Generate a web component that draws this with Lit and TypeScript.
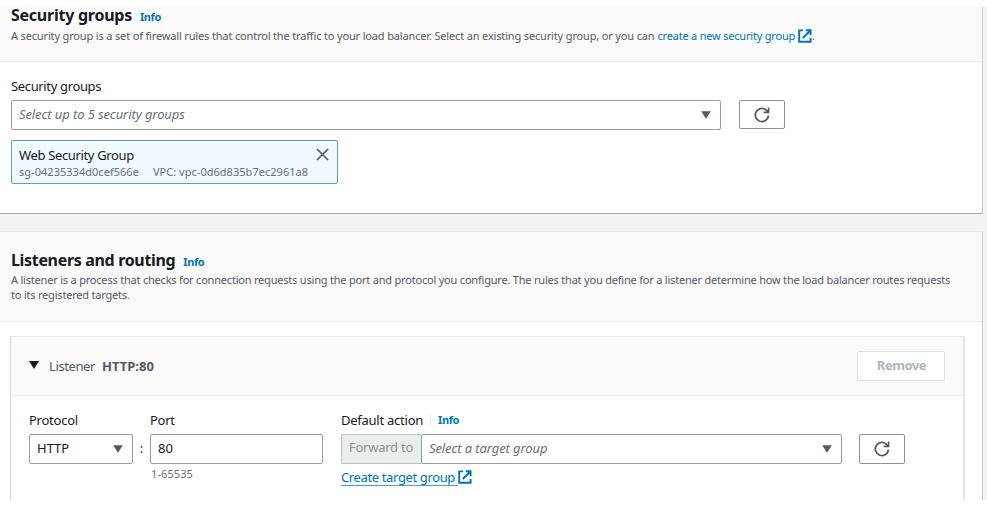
import { LitElement, html, css } from "lit";
import { customElement, property } from "lit/decorators.js";

const base = css`
  * {
    box-sizing: border-box;
  }
  :host {
    font-family: "Noto Sans", "Open Sans", sans-serif;
  }
  svg {
    display: block;
    flex: none;
  }
`;

@customElement("external-icon")
class ExternalIcon extends LitElement {
  static styles = [
    base,
    css`
      :host {
        display: block;
        width: 14px;
        height: 14px;
        flex: none;
        color: #0073bb;
      }
    `,
  ];
  render() {
    return html`<svg width="14" height="14" viewBox="0 0 14 14" fill="none" stroke="currentColor" stroke-width="1.9">
      <path d="M5 1.4H1.2v11.4h11.4V9" />
      <path d="M7.8 1.2h4.8v5M12.3 1.5L4.8 9" />
    </svg>`;
  }
}

@customElement("refresh-button")
class RefreshButton extends LitElement {
  static styles = [
    base,
    css`
      :host {
        display: block;
        flex: none;
      }
      .button {
        width: 46px;
        height: 100%;
        padding: 0;
        display: flex;
        align-items: center;
        justify-content: center;
        border: 1px solid #8d9293;
        border-radius: 2px;
        background: #fff;
        color: #545b64;
      }
    `,
  ];
  render() {
    return html`<button class="button" aria-label="Refresh">
      <svg width="16" height="16" viewBox="0 0 16 16" fill="none" stroke="currentColor" stroke-width="1.8">
        <path d="M14.5 8.6A6.6 6.6 0 1 1 12.9 3.7L14.4 5.2" />
        <path d="M14.6 0.6v4.8H9.6" stroke-width="1.6" />
      </svg>
    </button>`;
  }
}

@customElement("select-field")
class SelectField extends LitElement {
  @property() text = "";
  @property({ type: Boolean }) placeholder = false;
  static styles = [
    base,
    css`
      :host {
        display: block;
        height: 30px;
      }
      .field {
        height: 100%;
        display: flex;
        align-items: center;
        justify-content: space-between;
        padding: 0 9px 0 7px;
        border: 1px solid #989d9e;
        border-radius: 2px;
        background: #fff;
        color: #16191f;
        font-size: 13px;
        line-height: 18px;
        white-space: nowrap;
      }
      .text {
        padding-bottom: 2px;
      }
      .hint {
        color: #687078;
        font-style: italic;
        letter-spacing: -0.1px;
      }
    `,
  ];
  render() {
    return html`<div class="field">
      <span class=${this.placeholder ? "text hint" : "text"}>${this.text}</span>
      <svg width="10" height="8" viewBox="0 0 10 8" fill="#545b64"><path d="M0.2 0.3h9.6L5 7.8z" /></svg>
    </div>`;
  }
}

@customElement("app-root")
class AppRoot extends LitElement {
  static styles = [
    base,
    css`
      :host {
        display: block;
        height: 508px;
        padding: 7px 0 8px;
        background: #fff;
        color: #16191f;
        font-size: 13px;
        line-height: 18px;
        white-space: nowrap;
      }
      .page {
        height: 493px;
        background: #f2f3f3;
        padding-right: 4px;
        display: flex;
        flex-direction: column;
        gap: 17px;
      }
      .panel {
        flex: none;
        background: #fff;
        border-right: 1px solid #c5cacc;
      }
      .groups {
        height: 207px;
        border-bottom: 1px solid #a2a4a5;
      }
      .listeners {
        height: 269px;
        border-top: 1px solid #eaeded;
      }
      .head {
        display: flow-root;
        background: #fafafa;
        border-bottom: 1px solid #eaeded;
        padding-left: 11px;
      }
      .groups .head {
        height: 55px;
      }
      .listeners .head {
        height: 90px;
        padding-top: 16px;
      }
      .heading {
        display: flex;
        align-items: baseline;
        gap: 8px;
      }
      .groups .heading {
        margin-top: -3px;
      }
      h2 {
        margin: 0;
        font-size: 16px;
        line-height: 22px;
        font-weight: 700;
        letter-spacing: -0.25px;
      }
      .listeners h2 {
        letter-spacing: -0.33px;
        line-height: 24px;
      }
      .info {
        font-size: 11px;
        line-height: 14px;
        font-weight: 700;
        color: #0073bb;
        letter-spacing: -0.4px;
      }
      .desc {
        display: flex;
        align-items: center;
        font-size: 11px;
        line-height: 15px;
        color: #545b64;
        letter-spacing: -0.157px;
      }
      .groups .desc {
        margin-top: 2px;
      }
      .listeners .desc {
        display: block;
        letter-spacing: -0.203px;
      }
      .desc a {
        color: #0073bb;
        letter-spacing: -0.2px;
        margin-left: 3px;
        margin-right: 3px;
      }
      .label {
        letter-spacing: -0.25px;
      }
      .body {
        padding: 15px 0 0 11px;
      }
      .wide {
        letter-spacing: -0.35px;
      }
      .picker {
        display: flex;
        gap: 18px;
        margin-top: 5px;
      }
      .picker select-field {
        width: 710px;
      }
      .picker refresh-button {
        height: 29px;
      }
      .token {
        margin-top: 10px;
        width: 327px;
        height: 44px;
        display: flex;
        justify-content: space-between;
        padding: 5px 8px 0 7px;
        border: 1px solid #5a9fb2;
        border-radius: 2px;
        background: #f1faff;
      }
      .dismiss {
        margin-top: 2px;
      }
      .meta {
        display: flex;
        gap: 14px;
        font-size: 11px;
        line-height: 16px;
        letter-spacing: 0.03px;
        color: #687078;
      }
      .card {
        margin: 14px 17px 0 10px;
        height: 164px;
        border: 1px solid #eaeded;
        border-right: 2px solid #e4e6e6;
        border-left-color: #d5dbdb;
        border-bottom: 0;
      }
      .bar {
        height: 59px;
        display: flex;
        align-items: center;
        padding: 0 18px 0 18px;
        background: #fafafa;
        border-bottom: 1px solid #eaeded;
        color: #545b64;
      }
      .name,
      .proto {
        padding-bottom: 1px;
      }
      .bar svg {
        margin-bottom: 2px;
      }
      .name {
        margin-left: 10px;
        letter-spacing: -0.39px;
      }
      .proto {
        margin-left: 7px;
        font-weight: 700;
      }
      .remove {
        margin-left: auto;
        width: 88px;
        height: 30px;
        padding: 0 0 2px 1px;
        border: 1px solid #dfe3e3;
        border-radius: 2px;
        background: #fff;
        color: #aab7b8;
        font: 700 13px/18px "Noto Sans", sans-serif;
        letter-spacing: -0.45px;
      }
      .form {
        display: flex;
        padding: 15px 0 0 18px;
      }
      .control {
        margin-top: 5px;
      }
      .protocol {
        width: 104px;
      }
      .colon {
        width: 17px;
        padding-top: 28px;
        text-align: center;
      }
      .port {
        width: 173px;
      }
      .input {
        height: 30px;
        border: 1px solid #989d9e;
        border-radius: 2px;
        padding: 4px 7px;
      }
      .note {
        margin-top: 1px;
        padding-left: 1px;
        font-size: 11px;
        line-height: 18px;
        letter-spacing: 0.1px;
        color: #687078;
      }
      .action {
        width: 501px;
        margin-left: 18px;
      }
      .caption {
        display: flex;
        align-items: center;
      }
      .caption .info {
        margin-left: 7px;
        padding-left: 7px;
        border-left: 1px solid #eaeded;
      }
      .join {
        display: flex;
      }
      .forward {
        width: 80px;
        height: 30px;
        padding: 3px 0 0 7px;
        border: 1px solid #b9c3c4;
        border-right: 0;
        border-radius: 2px 0 0 2px;
        background: #eaeded;
        color: #879596;
        letter-spacing: -0.25px;
      }
      .join select-field {
        flex: 1;
      }
      .create {
        display: inline-flex;
        align-items: center;
        margin-top: 5px;
        color: #0073bb;
        letter-spacing: -0.37px;
      }
      .create span {
        padding-right: 3px;
        border-bottom: 1px solid #4d9dcf;
        line-height: 16px;
      }
      .create external-icon {
        margin-bottom: 1px;
      }
      .form > refresh-button {
        height: 30px;
        margin: 23px 0 0 17px;
      }
    `,
  ];

  render() {
    return html`<div class="page">
      <section class="panel groups">
        <header class="head">
          <div class="heading">
            <h2>Security groups</h2>
            <a class="info">Info</a>
          </div>
          <div class="desc">
            <span>A security group is a set of firewall rules that control the traffic to your load balancer. Select an existing security group, or you can</span>
            <a>create a new security group</a><external-icon></external-icon><span>.</span>
          </div>
        </header>
        <div class="body">
          <div class="label wide">Security groups</div>
          <div class="picker">
            <select-field placeholder text="Select up to 5 security groups"></select-field>
            <refresh-button></refresh-button>
          </div>
          <div class="token">
            <div>
              <div class="wide">Web Security Group</div>
              <div class="meta"><span>sg-04235334d0cef566e</span><span>VPC: vpc-0d6d835b7ec2961a8</span></div>
            </div>
            <svg class="dismiss" width="13" height="13" viewBox="0 0 13 13" fill="none" stroke="#545b64" stroke-width="1.7">
              <path d="M1 1l11 11M12 1L1 12" />
            </svg>
          </div>
        </div>
      </section>

      <section class="panel listeners">
        <header class="head">
          <div class="heading">
            <h2>Listeners and routing</h2>
            <a class="info">Info</a>
          </div>
          <div class="desc">
            A listener is a process that checks for connection requests using the port and protocol you configure. The rules that you define for a listener determine how the load balancer routes requests<br />to its registered targets.
          </div>
        </header>
        <div class="card">
          <div class="bar">
            <svg width="10" height="8" viewBox="0 0 10 8" fill="#16191f"><path d="M0 0h10L5 8z" /></svg>
            <span class="name">Listener</span>
            <span class="proto">HTTP:80</span>
            <button class="remove">Remove</button>
          </div>
          <div class="form">
            <div class="protocol">
              <div class="label">Protocol</div>
              <select-field class="control" text="HTTP"></select-field>
            </div>
            <div class="colon">:</div>
            <div class="port">
              <div class="label">Port</div>
              <div class="input control">80</div>
              <div class="note">1-65535</div>
            </div>
            <div class="action">
              <div class="caption"><span class="label">Default action</span><a class="info">Info</a></div>
              <div class="join control">
                <div class="forward">Forward to</div>
                <select-field placeholder text="Select a target group"></select-field>
              </div>
              <a class="create"><span>Create target group</span><external-icon></external-icon></a>
            </div>
            <refresh-button></refresh-button>
          </div>
        </div>
      </section>
    </div>`;
  }
}
